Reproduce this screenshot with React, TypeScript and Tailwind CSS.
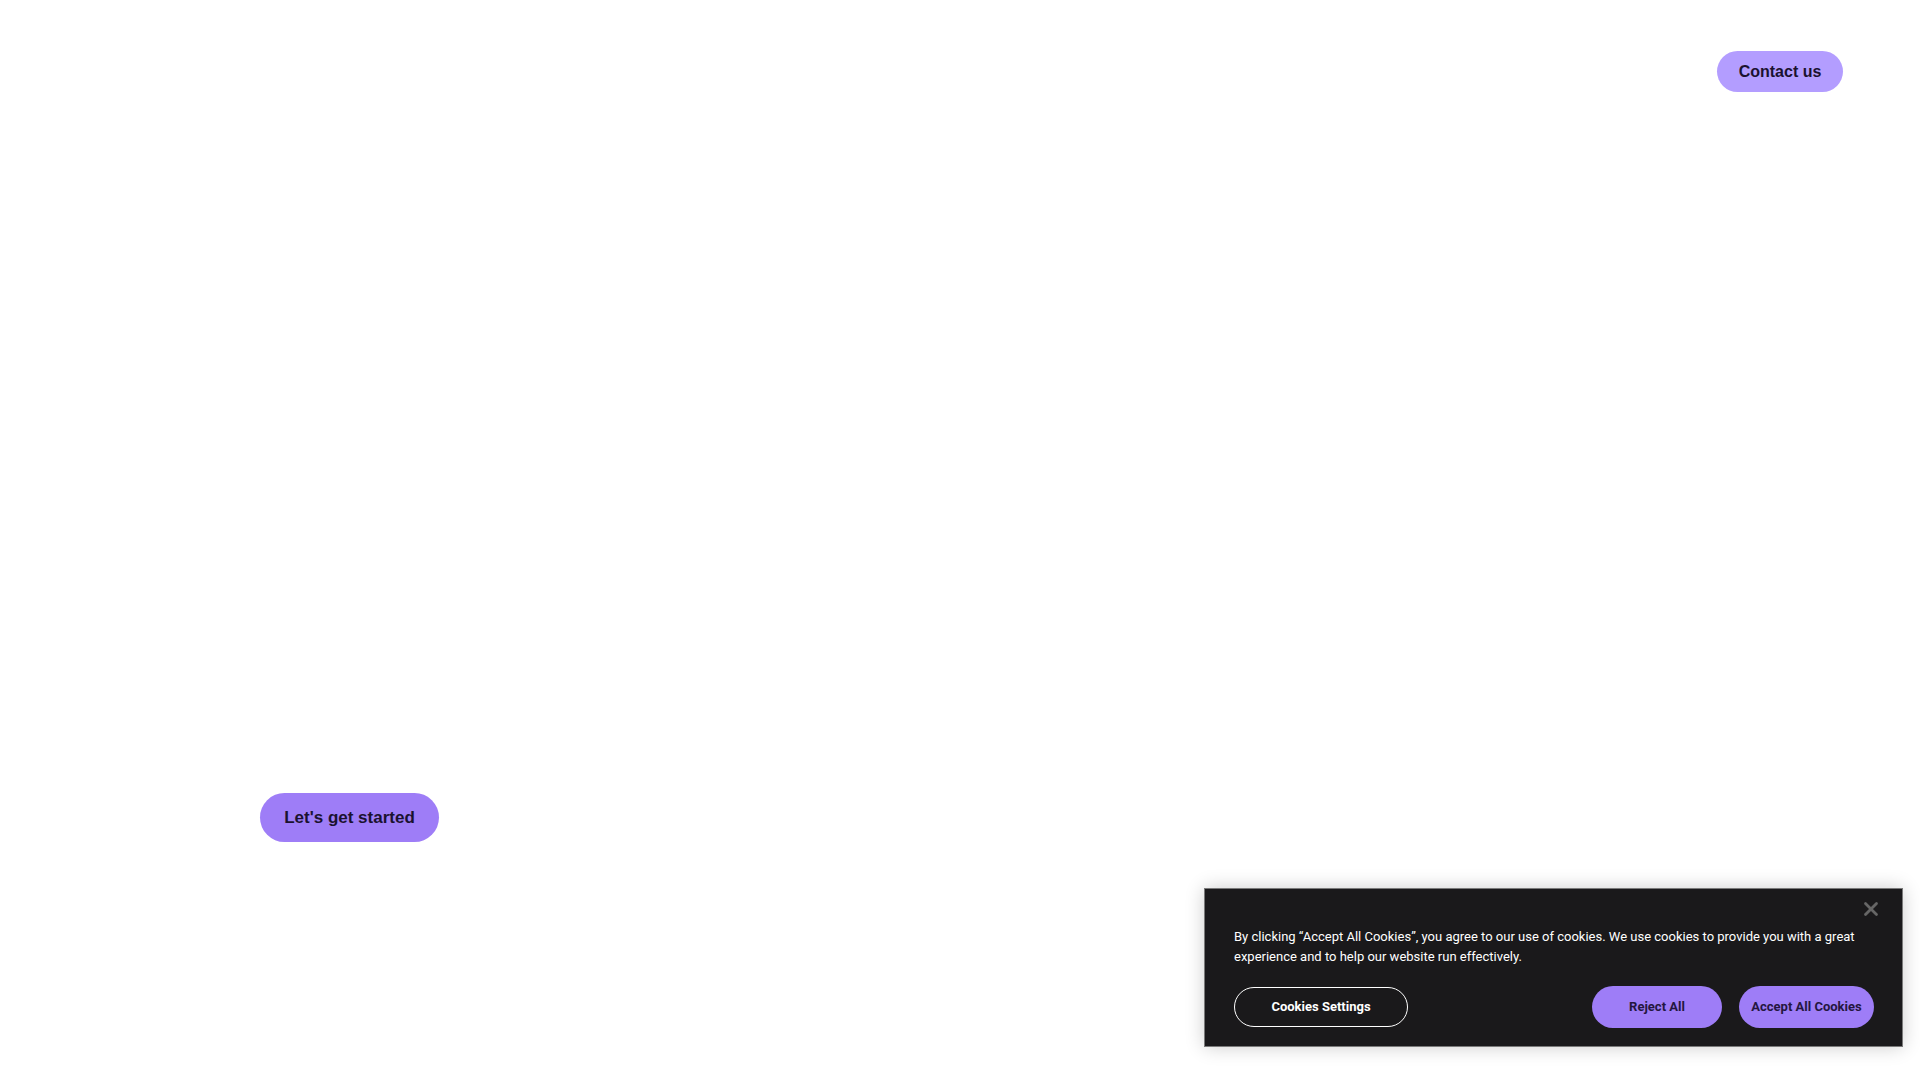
import { X } from 'lucide-react'

const pill = 'flex items-center justify-center rounded-full font-bold'

function CookieBanner() {
  return (
    <div className="absolute bottom-[33px] right-[17px] w-[699px] border border-[#7a7a7a] bg-[#1a191b] pb-[18px] pl-[29px] pr-[28px] pt-[38px] shadow-[0_0_18px_rgba(0,0,0,0.2)] font-['Roboto',sans-serif]">
      <button className="absolute right-[19px] top-[8px] flex h-[24px] w-[24px] items-center justify-center text-[#666666]">
        <X className="h-[22px] w-[22px]" strokeWidth={3} />
      </button>
      <p className="text-[13px] leading-[20px] text-white">
        By clicking “Accept All Cookies”, you agree to our use of cookies. We use cookies to provide you with a great
        experience and to help our website run effectively.
      </p>
      <div className="mt-[19px] flex items-center">
        <button className={`${pill} h-[40px] w-[174px] border border-white text-[13px] text-white`}>Cookies Settings</button>
        <div className="ml-auto flex gap-[17px]">
          <button className={`${pill} h-[42px] w-[130px] bg-[#9e7df7] text-[13px] text-[#241640]`}>Reject All</button>
          <button className={`${pill} h-[42px] w-[135px] bg-[#9e7df7] text-[13px] text-[#241640]`}>Accept All Cookies</button>
        </div>
      </div>
    </div>
  )
}

export default function App() {
  return (
    <div className="relative h-[1080px] w-full overflow-hidden bg-white font-['Liberation_Sans',sans-serif]">
      <header className="flex justify-end pr-[77px] pt-[51px]">
        <a className={`${pill} h-[41px] w-[126px] bg-[#b39dff] text-[16px] text-[#1b1230]`}>Contact us</a>
      </header>
      <section className="pl-[260px] pt-[701px]">
        <a className={`${pill} h-[49px] w-[179px] bg-[#9e7df7] text-[17px] text-[#1b1230]`}>Let's get started</a>
      </section>
      <CookieBanner />
    </div>
  )
}
